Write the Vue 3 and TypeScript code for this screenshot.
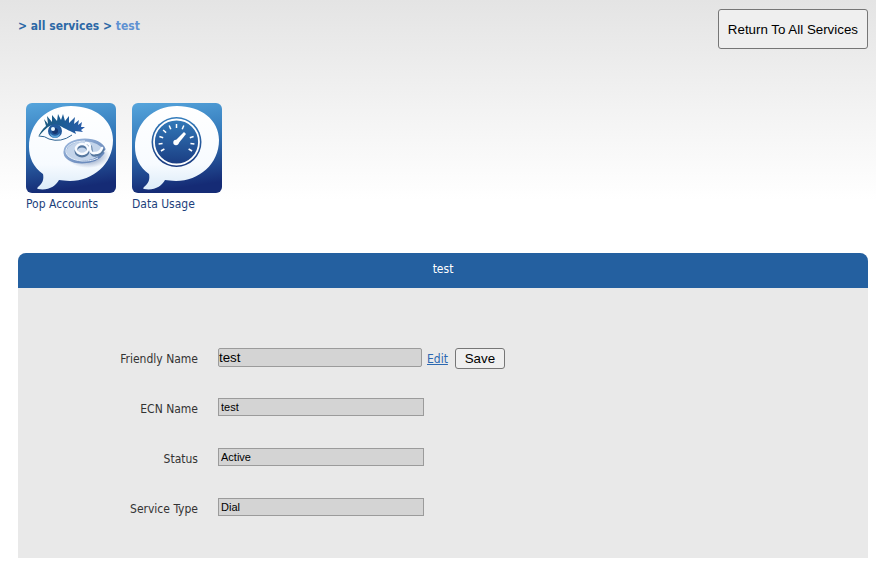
<script setup lang="ts">
import { ref } from 'vue'

interface Field {
  id: string
  label: string
  value: string
}

const friendlyName = ref('test')
const fields: Field[] = [
  { id: 'ecn-name', label: 'ECN Name', value: 'test' },
  { id: 'status', label: 'Status', value: 'Active' },
  { id: 'service-type', label: 'Service Type', value: 'Dial' },
]

// Gauge ticks sweep from lower left over the top to lower right.
const ticks: number[] = [-120, -96, -72, -48, -24, 0, 24, 72, 96, 120]
</script>

<template>
  <div class="page">
    <header class="top">
      <nav class="crumbs" aria-label="Breadcrumb">
        &gt; <a href="#services">all services</a> &gt; <span class="current">test</span>
      </nav>
      <button type="button" class="return">Return To All Services</button>
    </header>

    <nav class="shortcuts" aria-label="Service tools">
      <a href="#pop" class="shortcut">
        <svg class="tile" viewBox="0 0 90 90" aria-hidden="true">
          <defs>
            <linearGradient id="tileBg" x1="0" y1="0" x2="0.15" y2="1">
              <stop offset="0" stop-color="#56a5dc" />
              <stop offset="0.45" stop-color="#347abb" />
              <stop offset="1" stop-color="#152b75" />
            </linearGradient>
            <linearGradient id="bubble" x1="0" y1="0" x2="0" y2="1">
              <stop offset="0" stop-color="#ffffff" />
              <stop offset="0.7" stop-color="#f7fbff" />
              <stop offset="1" stop-color="#dcebf8" />
            </linearGradient>
            <linearGradient id="lash" x1="0" y1="0" x2="1" y2="0">
              <stop offset="0" stop-color="#1d5c7c" />
              <stop offset="0.5" stop-color="#1c5c94" />
              <stop offset="1" stop-color="#2a5cab" />
            </linearGradient>
            <linearGradient id="ring" x1="0" y1="0" x2="1" y2="1">
              <stop offset="0" stop-color="#9db8dc" />
              <stop offset="1" stop-color="#5c7eb4" />
            </linearGradient>
            <radialGradient id="shade">
              <stop offset="0.5" stop-color="#8b9fc2" stop-opacity="0.7" />
              <stop offset="1" stop-color="#8b9fc2" stop-opacity="0" />
            </radialGradient>
          </defs>
          <rect width="90" height="90" rx="6" fill="url(#tileBg)" />
          <path fill="url(#bubble)" d="M45 3C69 3 87 17 87 37C87 61 67 78 44 78C39 78 36 77 33 77C30 83 22 88 12 86C11 86 11 85 12 84C17 80 18 76 17 71C7 64 3 54 3 44C3 20 21 3 45 3Z" />

          <path fill="url(#lash)" d="M12 34C14 30 16 26 20 23L18 16L22 21L21 13L26 19L26 12L31 18L32 11L35 17L37 11L39 18L43 13L43 20L49 14L48 21L53 17L52 22L56 19L55 24L59 24L55 27L57 29L49 28L50 31L44 28C39 26 36 23 30 22C22 21 18 28 12 34Z" />
          <path fill="#f7fbff" d="M15 33C18 27 23 24 29 24C36 25 38 30 46 32C40 35 34 37 28 36C22 36 19 33 15 33Z" />
          <path d="M13 33Q19 33 23 36Q35 40 46 32" fill="none" stroke="#2c6291" stroke-width="1" />
          <circle cx="29" cy="28" r="7" fill="#225a9c" />
          <path d="M24 30A5 5 0 0 0 34 30A6 6 0 0 1 24 30Z" fill="#5ba4d8" />
          <circle cx="29" cy="28" r="3" fill="#143871" />
          <circle cx="27" cy="26" r="2" fill="#e9f8ff" />

          <ellipse cx="62" cy="53" rx="22" ry="12" fill="url(#shade)" />
          <ellipse cx="58" cy="48" rx="19" ry="11" fill="#c3d4ea" />
          <path d="M77 50C72 57 64 59 56 59C45 59 38 54 39 48C40 41 49 37 59 37C69 37 76 41 78 46" fill="none" stroke="url(#ring)" stroke-width="3" stroke-linecap="round" />
          <path d="M72 55C66 58 61 58 56 58C46 57 39 53 40 47C41 41 50 38 59 38" fill="none" stroke="#e4edf8" stroke-width="1" />
          <g fill="none" stroke-linecap="round">
            <g stroke="#55779f" stroke-width="3">
              <ellipse cx="56" cy="48" rx="6" ry="5" />
              <path d="M61 42Q65 42 65 46C65 51 67 53 70 52C73 52 75 50 77 47" />
            </g>
            <g stroke="#f8fbff" stroke-width="2.500">
              <ellipse cx="56" cy="46" rx="6" ry="5" />
              <path d="M60 40Q64 40 64 44C64 49 66 51 69 50C72 50 75 48 76 45" />
            </g>
          </g>
        </svg>
        <span>Pop Accounts</span>
      </a>
      <a href="#usage" class="shortcut">
        <svg class="tile" viewBox="0 0 90 90" aria-hidden="true">
          <defs>
            <linearGradient id="gauge" x1="0" y1="0" x2="0" y2="1">
              <stop offset="0" stop-color="#347dbc" />
              <stop offset="1" stop-color="#19397f" />
            </linearGradient>
          </defs>
          <rect width="90" height="90" rx="6" fill="url(#tileBg)" />
          <path fill="url(#bubble)" d="M45 3C69 3 87 17 87 37C87 61 67 78 44 78C39 78 36 77 33 77C30 83 22 88 12 86C11 86 11 85 12 84C17 80 18 76 17 71C7 64 3 54 3 44C3 20 21 3 45 3Z" />
          <circle cx="44.500" cy="39" r="25" fill="url(#gauge)" />
          <circle cx="44.500" cy="39" r="22.500" fill="none" stroke="#ffffff" stroke-width="1.800" />
          <g stroke="#ffffff" stroke-width="1.500">
            <line v-for="angle in ticks" :key="angle" x1="44.500" y1="21" x2="44.500" y2="25" :transform="`rotate(${angle} 44.5 39)`" />
          </g>
          <path d="M43 38L52 29L54 31L46 41Z" fill="#ffffff" />
          <circle cx="44" cy="39.500" r="2.700" fill="#ffffff" />
        </svg>
        <span>Data Usage</span>
      </a>
    </nav>

    <main class="panel">
      <h1 class="title">test</h1>
      <form class="form" @submit.prevent>
        <div class="row">
          <label for="friendly-name">Friendly Name</label>
          <div class="control">
            <input id="friendly-name" v-model="friendlyName" class="editable" type="text" readonly />
            <a href="#edit" class="edit">Edit</a>
            <button type="submit" class="save">Save</button>
          </div>
        </div>
        <div v-for="field in fields" :key="field.id" class="row">
          <label :for="field.id">{{ field.label }}</label>
          <div class="control">
            <input :id="field.id" class="fixed" type="text" :value="field.value" readonly />
          </div>
        </div>
      </form>
    </main>
  </div>
</template>

<style>
body {
  margin: 0;
  background: #ffffff linear-gradient(#e4e4e4, #ffffff) no-repeat 0 0 / 100% 200px;
}
</style>

<style scoped>
.page {
  padding: 9px 8px 11px 18px;
  font: 12px/16px Tahoma, "DejaVu Sans Condensed", "Noto Sans", sans-serif;
  color: #333333;
}
.top {
  display: flex;
  justify-content: space-between;
  align-items: flex-start;
}
.crumbs {
  padding-top: 9px;
  font-weight: bold;
  color: #2c68a6;
}
.crumbs a {
  color: inherit;
  text-decoration: none;
}
.crumbs .current {
  color: #5f92d2;
}
button {
  box-sizing: border-box;
  border: 1px solid #767676;
  border-radius: 3px;
  background: #efefef;
  color: #000000;
  font-family: Arial, "Liberation Sans", sans-serif;
}
.return {
  height: 40px;
  padding: 0 9px;
}
.shortcuts {
  display: flex;
  gap: 16px;
  padding: 54px 8px 0;
}
.shortcut {
  width: 90px;
  color: #1d3f7c;
  text-decoration: none;
}
.tile {
  display: block;
  width: 90px;
  height: 90px;
  margin-bottom: 3px;
}
.panel {
  margin-top: 41px;
  border-radius: 8px 8px 0 0;
  overflow: hidden;
  background: #e9e9e9;
}
.title {
  margin: 0;
  padding: 8px 0 11px;
  background: #2460a0;
  color: #ffffff;
  font-size: 12px;
  font-weight: normal;
  text-align: center;
}
.form {
  padding: 45px 0 25px;
}
.row {
  display: grid;
  grid-template-columns: 180px 1fr;
  column-gap: 20px;
  align-items: center;
  height: 50px;
}
.row label,
.edit {
  line-height: 22px;
}
.row label {
  height: 20px;
  text-align: right;
}
.control {
  display: flex;
  align-items: flex-start;
  height: 20px;
}
input {
  box-sizing: border-box;
  margin: 0;
  border: 1px solid #9b9b9b;
  background: #d4d4d4;
  color: #000000;
  font-family: Arial, "Liberation Sans", sans-serif;
}
.editable {
  width: 204px;
  height: 19px;
  padding: 0;
  border-radius: 2px;
}
.fixed {
  width: 206px;
  height: 18px;
  padding: 0 2px;
  font-size: 11px;
}
.edit {
  margin: 0 7px 0 5px;
  color: #2c68b0;
}
.save {
  width: 50px;
  height: 21px;
  padding: 0;
}
</style>
